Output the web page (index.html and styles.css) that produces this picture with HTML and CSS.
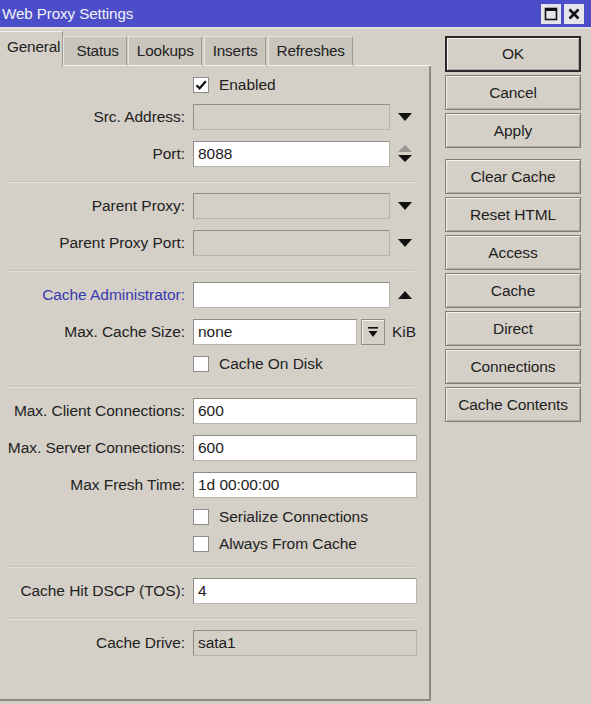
FILE: index.html
```html
<!DOCTYPE html>
<html>
<head>
<meta charset="utf-8">
<link rel="stylesheet" href="styles.css">
</head>
<body>
<div class="window">
  <div class="titlebar">
    <span class="title">Web Proxy Settings</span>
    <div class="tb-btns">
      <span class="tb-btn"><svg width="14" height="14" viewBox="0 0 14 14"><rect x="1.5" y="1.5" width="11" height="11" fill="none" stroke="#111" stroke-width="1.6"/><rect x="1.5" y="1.5" width="11" height="2.5" fill="#111"/></svg></span>
      <span class="tb-btn"><svg width="14" height="14" viewBox="0 0 14 14"><path d="M2.5 2.5L11.5 11.5M11.5 2.5L2.5 11.5" stroke="#111" stroke-width="2.6"/></svg></span>
    </div>
  </div>
  <div class="main">
    <div class="left">
      <div class="tabs">
        <div class="tab active">General</div>
        <div class="tab">Status</div>
        <div class="tab">Lookups</div>
        <div class="tab">Inserts</div>
        <div class="tab">Refreshes</div>
        <div class="tab-fill"></div>
      </div>
      <div class="panel">
        <div class="crow">
          <span class="check"><svg width="14" height="14" viewBox="0 0 14 14"><path d="M2.5 7.2L5.6 10.3L11.8 3.2" fill="none" stroke="#111" stroke-width="2.2"/></svg></span>
          <span class="clabel">Enabled</span>
        </div>
        <div class="row">
          <span class="lbl">Src. Address:</span>
          <span class="field short disabled"></span>
          <span class="arrow"><svg width="14" height="8" viewBox="0 0 14 8"><path d="M0 0H14L7 8Z" fill="#111"/></svg></span>
        </div>
        <div class="row">
          <span class="lbl">Port:</span>
          <span class="field short">8088</span>
          <span class="arrow spin"><svg width="14" height="18" viewBox="0 0 14 18"><path d="M0 7H14L7 0Z" fill="#9a9894"/><path d="M0 10H14L7 17Z" fill="#111"/></svg></span>
        </div>
        <div class="sep"></div>
        <div class="row">
          <span class="lbl">Parent Proxy:</span>
          <span class="field short disabled"></span>
          <span class="arrow"><svg width="14" height="8" viewBox="0 0 14 8"><path d="M0 0H14L7 8Z" fill="#111"/></svg></span>
        </div>
        <div class="row">
          <span class="lbl">Parent Proxy Port:</span>
          <span class="field short disabled"></span>
          <span class="arrow"><svg width="14" height="8" viewBox="0 0 14 8"><path d="M0 0H14L7 8Z" fill="#111"/></svg></span>
        </div>
        <div class="sep"></div>
        <div class="row">
          <span class="lbl blue">Cache Administrator:</span>
          <span class="field short"></span>
          <span class="arrow"><svg width="14" height="8" viewBox="0 0 14 8"><path d="M0 8H14L7 0Z" fill="#111"/></svg></span>
        </div>
        <div class="row">
          <span class="lbl">Max. Cache Size:</span>
          <span class="field mid">none</span>
          <span class="minibtn"><svg width="10" height="11" viewBox="0 0 10 11"><rect x="0" y="0" width="10" height="1.6" fill="#111"/><path d="M0.5 4H9.5L5 10Z" fill="#111"/></svg></span>
          <span class="unit">KiB</span>
        </div>
        <div class="crow">
          <span class="check"></span>
          <span class="clabel">Cache On Disk</span>
        </div>
        <div class="sep"></div>
        <div class="row">
          <span class="lbl">Max. Client Connections:</span>
          <span class="field long">600</span>
        </div>
        <div class="row">
          <span class="lbl">Max. Server Connections:</span>
          <span class="field long">600</span>
        </div>
        <div class="row">
          <span class="lbl">Max Fresh Time:</span>
          <span class="field long">1d 00:00:00</span>
        </div>
        <div class="crow">
          <span class="check"></span>
          <span class="clabel">Serialize Connections</span>
        </div>
        <div class="crow">
          <span class="check"></span>
          <span class="clabel">Always From Cache</span>
        </div>
        <div class="sep"></div>
        <div class="row">
          <span class="lbl">Cache Hit DSCP (TOS):</span>
          <span class="field long">4</span>
        </div>
        <div class="sep"></div>
        <div class="row">
          <span class="lbl">Cache Drive:</span>
          <span class="field long disabled">sata1</span>
        </div>
      </div>
    </div>
    <div class="buttons">
      <div class="btn default">OK</div>
      <div class="btn">Cancel</div>
      <div class="btn">Apply</div>
      <div class="btn group">Clear Cache</div>
      <div class="btn">Reset HTML</div>
      <div class="btn">Access</div>
      <div class="btn">Cache</div>
      <div class="btn">Direct</div>
      <div class="btn">Connections</div>
      <div class="btn">Cache Contents</div>
    </div>
  </div>
</div>
</body>
</html>
```

FILE: styles.css
```css
html, body {
  margin: 0;
  padding: 0;
  background: #d4d0c8;
  font-family: "Liberation Sans", Arial, sans-serif;
  color: #222;
}

.window {
  width: 591px;
  height: 704px;
  overflow: hidden;
  background: #d4d0c8;
}

.titlebar {
  height: 29px;
  background: #4b4ec8;
  display: flex;
  align-items: center;
  justify-content: space-between;
  border-bottom: 2px solid #e2e0dc;
  box-sizing: border-box;
}

.title {
  color: #f2f2fa;
  font-size: 15.2px;
  padding-left: 2px;
  letter-spacing: -0.1px;
}

.tb-btns {
  display: flex;
  gap: 3px;
  padding-right: 7px;
}

.tb-btn {
  width: 20px;
  height: 20px;
  background: #e4e4ec;
  display: flex;
  align-items: center;
  justify-content: center;
}

.main {
  display: flex;
}

.left {
  width: 431px;
  display: flex;
  flex-direction: column;
}

.tabs {
  height: 37px;
  display: flex;
  align-items: flex-end;
}

.tab {
  height: 30px;
  box-sizing: border-box;
  padding: 0 7px 0 8px;
  font-size: 15.3px;
  display: flex;
  align-items: center;
  background: #c9c5bd;
  border-left: 1px solid #e6e4df;
  border-right: 1px solid #9c9993;
  border-top: 1px solid #e6e4df;
  border-bottom: 1px solid #f6f5f2;
  margin-right: 2px;
  letter-spacing: -0.15px;
}

.tab:nth-child(2) {
  padding: 0 7px 0 12px;
  margin-right: 1px;
}

.tab.active {
  height: 35px;
  background: #d4d0c8;
  border-left: none;
  border-top: 1px solid #f2f1ee;
  border-right: 1px solid #9c9993;
  border-bottom: none;
  padding: 0 2px 4px 7px;
  margin-right: 0;
  font-size: 15.3px;
}

.tab-fill {
  flex: 1;
  height: 1px;
  background: #f6f5f2;
  margin-right: 0;
}

.panel {
  height: 635px;
  box-sizing: border-box;
  border-right: 2px solid #8c8a85;
  border-bottom: 2px solid #8c8a85;
  padding-top: 11px;
  display: flex;
  flex-direction: column;
  gap: 11px;
}

.row {
  height: 26px;
  display: flex;
  align-items: center;
  font-size: 15.5px;
  letter-spacing: -0.05px;
}

.lbl {
  width: 185px;
  text-align: right;
  margin-right: 8px;
  white-space: nowrap;
}

.lbl.blue {
  color: #3838b0;
}

.field {
  height: 26px;
  box-sizing: border-box;
  background: #fff;
  border: 1px solid #8f8d88;
  border-right-color: #b8b5ae;
  border-bottom-color: #b8b5ae;
  padding-left: 4px;
  display: flex;
  align-items: center;
  color: #1c1c1c;
}

.field.short { width: 197px; }
.field.long { width: 224px; }
.field.mid { width: 164px; }

.field.disabled {
  background: #d4d0c8;
}

.arrow {
  margin-left: 8px;
  width: 14px;
  display: flex;
  align-items: center;
}

.minibtn {
  margin-left: 4px;
  width: 24px;
  height: 26px;
  box-sizing: border-box;
  border: 1px solid #8f8d88;
  box-shadow: inset 1px 1px 0 #f4f3f0;
  display: flex;
  align-items: center;
  justify-content: center;
}

.unit {
  margin-left: 7px;
}

.crow {
  height: 16px;
  display: flex;
  align-items: center;
  padding-left: 193px;
  font-size: 15.5px;
  letter-spacing: -0.05px;
}

.check {
  width: 16px;
  height: 16px;
  box-sizing: border-box;
  background: #fff;
  border: 1px solid #8f8d88;
  display: flex;
  align-items: center;
  justify-content: center;
}

.clabel {
  margin-left: 10px;
}

.sep {
  height: 0;
  margin: 3px 14px -1px 8px;
  border-top: 1px solid #c4c1ba;
  border-bottom: 1px solid #e4e2dd;
}

.buttons {
  margin-left: 14px;
  width: 136px;
  padding-top: 7px;
  display: flex;
  flex-direction: column;
  gap: 3px;
}

.btn {
  height: 35px;
  box-sizing: border-box;
  border: 1px solid #7f7d78;
  box-shadow: inset 1px 1px 0 #f4f3f0, inset -1px -1px 0 #aeaba4;
  display: flex;
  align-items: center;
  justify-content: center;
  font-size: 15.5px;
  letter-spacing: -0.1px;
  color: #1e1e1e;
}

.btn.default {
  height: 36px;
  border: 2px solid #2a2a2a;
}

.btn.group {
  margin-top: 8px;
}
```
